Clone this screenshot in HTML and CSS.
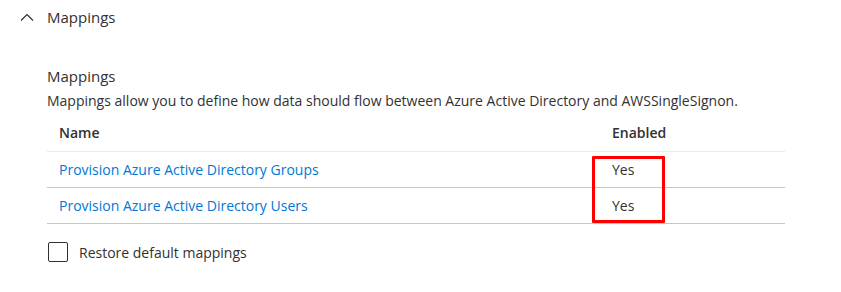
FILE: index.html
```html
<!DOCTYPE html>
<html lang="en">
<head>
  <meta charset="UTF-8">
  <title>Mappings</title>
  <link rel="stylesheet" href="styles.css">
</head>
<body>
  <div class="section-header">
    <svg class="chevron" width="14" height="8" viewBox="0 0 14 8"><path d="M1 7.5 L7 1.5 L13 7.5" fill="none" stroke="#323130" stroke-width="1.2"/></svg>
    <span class="section-title">Mappings</span>
  </div>

  <div class="content">
    <h3 class="title">Mappings</h3>
    <p class="desc">Mappings allow you to define how data should flow between Azure Active Directory and AWSSingleSignon.</p>

    <div class="table">
      <div class="row head">
        <div class="col-name">Name</div>
        <div class="col-enabled">Enabled</div>
      </div>
      <div class="rows">
        <div class="row">
          <div class="col-name"><a href="#">Provision Azure Active Directory Groups</a></div>
          <div class="col-enabled">Yes</div>
        </div>
        <div class="row">
          <div class="col-name"><a href="#">Provision Azure Active Directory Users</a></div>
          <div class="col-enabled">Yes</div>
        </div>
        <div class="highlight"></div>
      </div>
    </div>

    <label class="check">
      <span class="box"></span>
      <span>Restore default mappings</span>
    </label>
  </div>
</body>
</html>
```

FILE: styles.css
```css
body {
  margin: 0;
  font-family: "Open Sans", "Noto Sans", sans-serif;
  font-size: 14px;
  color: #323130;
  background-color: #ffffff;
}
.section-header {
  display: flex;
  align-items: center;
  height: 34px;
  padding-left: 20px;
}
.chevron {
  margin-right: 13px;
}
.section-title {
  font-size: 15px;
}
.content {
  width: 738px;
  padding-left: 47px;
  padding-top: 31px;
}
.title {
  margin: 0;
  font-size: 15px;
  font-weight: normal;
  line-height: 22px;
}
.desc {
  margin: 4px 0 0 0;
  line-height: 20px;
}
.table {
  margin-top: 3px;
}
.row {
  display: flex;
  align-items: center;
  height: 35px;
  border-bottom: 1px solid #c8c6c4;
}
.row.head {
  height: 37px;
  font-weight: 600;
  border-bottom-color: #edebe9;
}
.col-name {
  width: 553px;
  padding-left: 12px;
}
.col-enabled {
  flex: 1;
}
.rows {
  position: relative;
}
a {
  color: #0078d4;
  text-decoration: none;
}
.highlight {
  position: absolute;
  left: 545px;
  top: 4px;
  width: 67px;
  height: 61px;
  border: 3px solid #ff0000;
  border-radius: 1px;
}
.check {
  display: flex;
  align-items: center;
  margin-top: 18px;
}
.box {
  width: 18px;
  height: 18px;
  border: 1px solid #323130;
  border-radius: 2px;
  margin-left: 1px;
  margin-right: 11px;
}
```
